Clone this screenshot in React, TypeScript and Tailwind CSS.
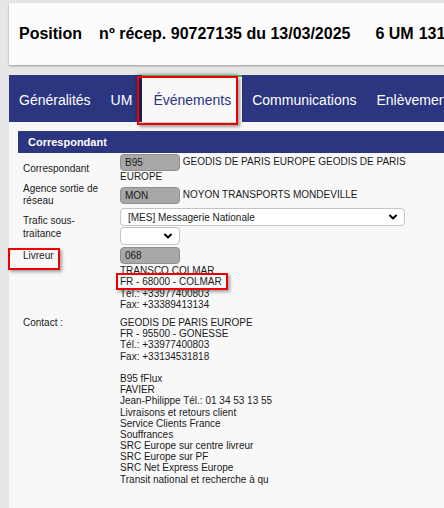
import { ChevronDown } from 'lucide-react'

const tabs = ['Généralités', 'UM', 'Événements', 'Communications', 'Enlèvements']

const livreurLines = ['TRANSCO COLMAR', 'FR - 68000 - COLMAR', 'Tél.: +33977400803', 'Fax: +33389413134']

const contactLines = [
    'GEODIS DE PARIS EUROPE',
    'FR - 95500 - GONESSE',
    'Tél.: +33977400803',
    'Fax: +33134531818',
    '',
    'B95 fFlux',
    'FAVIER',
    'Jean-Philippe Tél.: 01 34 53 13 55',
    'Livraisons et retours client',
    'Service Clients France',
    'Souffrances',
    'SRC Europe sur centre livreur',
    'SRC Europe sur PF',
    'SRC Net Express Europe',
    'Transit national et recherche à qu',
]

function Code({ value }: { value: string }) {
    return (
        <span className="inline-block align-middle w-[60px] h-[17px] leading-[15px] rounded-[4px] border border-[#8f8f8f] bg-[#a8a8a8] pl-[4px] text-[#1a1a1a]">
            {value}
        </span>
    )
}

function Select({ label, wide }: { label: string, wide?: boolean }) {
    return (
        <div className={`flex items-center justify-between h-[18px] rounded-[4px] border border-[#c4c4c4] bg-white pl-[7px] pr-[5px] ${wide ? 'w-[285px]' : 'w-[60px]'}`}>
            <span className="whitespace-nowrap">{label}</span>
            <ChevronDown className="w-[12px] h-[12px] text-black" strokeWidth={4} />
        </div>
    )
}

function Highlight({ className }: { className: string }) {
    return <div className={`absolute border-2 border-[#ee0000] shadow-[2px_2px_3px_rgba(0,0,0,0.35)] pointer-events-none ${className}`} />
}

export default function App() {
    return (
        <div className="relative w-[444px] h-[508px] overflow-hidden bg-[#e6e6e6] font-['Liberation_Sans',Arial,sans-serif] text-[#1a1a1a]">
            <div className="ml-[9px] mt-[3px] h-[62px] w-[460px] bg-[#fcfcfc] shadow-[0_1px_2px_rgba(0,0,0,0.35)] flex items-center pl-[10px] text-[16px] font-bold text-black whitespace-nowrap">
                <span>Position</span>
                <span className="ml-[17px]">nº récep. 90727135 du 13/03/2025</span>
                <span className="ml-[25px]">6 UM</span>
                <span className="ml-[5px]">131 kg</span>
            </div>

            <div className="ml-[9px] mt-[10px] h-[47px] w-[460px] bg-[#2b3580] flex whitespace-nowrap text-[14px]">
                {tabs.map(tab => (
                    tab === 'Événements' ? (
                        <div key={tab} className="flex items-center px-[11px] pt-[2px] bg-[#f8f8f8] text-[#2b3580] border-t-2 border-[#3fb34f] shadow-[-4px_0_4px_rgba(0,0,0,0.45)]">
                            {tab}
                        </div>
                    ) : (
                        <div key={tab} className="flex items-center px-[10px] pt-[4px] text-white">
                            {tab}
                        </div>
                    )
                ))}
            </div>

            <div className="ml-[9px] h-[400px] bg-[#f8f8f8] pt-[9px] pl-[9px]">
                <div className="h-[22px] bg-[#2b3580] text-white text-[11px] font-bold flex items-center pl-[10px]">
                    Correspondant
                </div>
                <table className="text-[10px] leading-[11.2px] border-collapse w-[412px]">
                    <tbody>
                        <tr>
                            <td className="w-[102px] pl-[5px] pt-px align-middle">Correspondant</td>
                            <td className="pt-px pr-[10px]">
                                <Code value="B95" /> GEODIS DE PARIS EUROPE GEODIS DE PARIS EUROPE
                            </td>
                        </tr>
                        <tr>
                            <td className="pl-[5px] pt-px leading-[12px] align-middle">Agence sortie de réseau</td>
                            <td className="pt-px align-middle">
                                <Code value="MON" /> NOYON TRANSPORTS MONDEVILLE
                            </td>
                        </tr>
                        <tr>
                            <td className="pl-[5px] pt-px pr-[14px] leading-[13px] align-middle">Trafic sous-traitance</td>
                            <td className="pt-px">
                                <Select label="[MES] Messagerie Nationale" wide />
                                <div className="mt-px">
                                    <Select label="" />
                                </div>
                            </td>
                        </tr>
                        <tr>
                            <td className="pl-[5px] pt-[2px] align-middle">Livreur</td>
                            <td className="pt-[2px]">
                                <Code value="068" />
                            </td>
                        </tr>
                        <tr>
                            <td />
                            <td className="pt-px">
                                {livreurLines.map(line => <div key={line}>{line}</div>)}
                            </td>
                        </tr>
                        <tr>
                            <td className="pl-[5px] pt-[7px] align-top">Contact :</td>
                            <td className="pt-[7px] align-top">
                                {contactLines.map((line, i) => (
                                    <div key={i} className="h-[11.2px] whitespace-nowrap">{line}</div>
                                ))}
                            </td>
                        </tr>
                    </tbody>
                </table>
            </div>

            <Highlight className="left-[137px] top-[76px] w-[101px] h-[49px]" />
            <Highlight className="left-[8px] top-[248px] w-[52px] h-[22px]" />
            <Highlight className="left-[116px] top-[273px] w-[112px] h-[17px]" />
        </div>
    )
}
